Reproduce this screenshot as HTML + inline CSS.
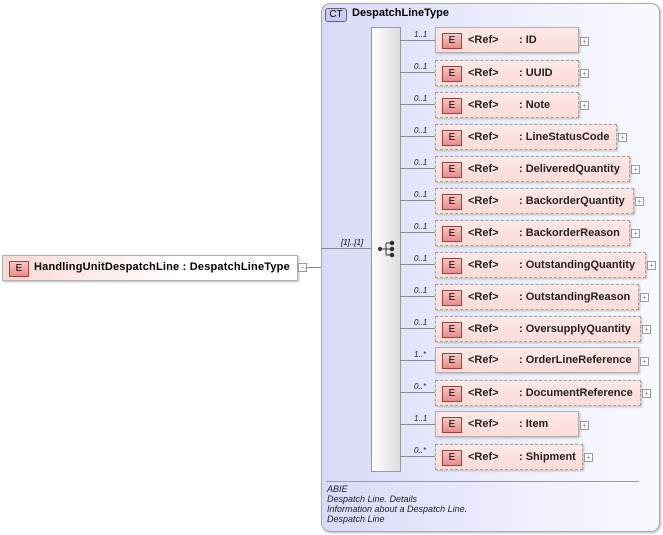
<!DOCTYPE html><html><head><style>
body{margin:0;width:663px;height:535px;background:#fff;position:relative;overflow:hidden;font-family:"Liberation Sans",Arial,sans-serif}
.a{position:absolute}
.ct{left:321px;top:3px;width:337px;height:527px;border:1px solid #a8a8b8;border-radius:9px;background:linear-gradient(90deg,#d8daf8,#eef0fd 60%,#f8f8ff);box-shadow:1px 1px 2px #bbb}
.seq{left:371px;top:27px;width:28px;height:443px;border:1px solid #999;background:linear-gradient(90deg,#fff,#ddd)}
.el{position:absolute;left:435px;height:24px;border:1px solid #b0b0b0;background:linear-gradient(180deg,#fde8e6,#fbdcd8);box-shadow:1px 1px 2px #bbb;font-size:11px;font-weight:bold;color:#222}
.el.o{border:1px dashed #a0a0a0;margin-top:1px}
.E{position:absolute;left:6px;top:5px;width:18px;height:14px;border:1px solid #a04040;background:linear-gradient(180deg,#f8c8c4,#e88c88);font-size:10px;font-weight:normal;text-align:center;line-height:14px;color:#000}
.r{position:absolute;left:32px;top:6px}
.n{position:absolute;left:83px;top:6px;white-space:nowrap}
.p{position:absolute;width:7px;height:7px;border:1px solid #999;background:#fff;font-size:8px;line-height:7px;text-align:center;color:#888}
.c{position:absolute;left:414px;font-size:8px;font-style:italic;color:#222}
.ln{position:absolute;height:1px;background:#888}
.d{position:absolute;left:327px;font-size:9px;font-style:italic;color:#222}
</style></head><body>
<div class="a ct"></div>
<div class="a" style="left:325px;top:8px;width:20px;height:12px;border:1px solid #666;border-radius:3px;background:#c8caf4;font-size:10px;text-align:center;line-height:12px">CT</div>
<div class="a" style="left:352px;top:7px;font-size:11px;font-weight:bold">DespatchLineType</div>
<div class="a seq"></div>
<svg class="a" style="left:377px;top:240px" width="20" height="18"><g fill="#333" stroke="#333"><circle cx="3" cy="9" r="1.6"/><line x1="3" y1="9" x2="9" y2="9"/><line x1="9" y1="3" x2="9" y2="15"/><line x1="9" y1="3" x2="14" y2="3"/><line x1="9" y1="9" x2="14" y2="9"/><line x1="9" y1="15" x2="14" y2="15"/><circle cx="15" cy="3" r="1.8"/><circle cx="15" cy="9" r="1.8"/><circle cx="15" cy="15" r="1.8"/></g></svg>
<div class="ln" style="left:321px;top:248px;width:50px"></div>
<div class="a" style="left:341px;top:238px;font-size:8px;font-style:italic">[1]..[1]</div>
<div class="ln" style="left:307px;top:267px;width:14px"></div>
<div class="a" style="left:2px;top:255px;width:294px;height:24px;border:1px solid #b0b0b0;background:linear-gradient(90deg,#fbd8d4,#fff 60%);box-shadow:1px 1px 2px #bbb;font-size:11px;font-weight:bold"><div class="E">E</div><div class="a" style="left:31px;top:5px;white-space:nowrap;letter-spacing:0.2px">HandlingUnitDespatchLine : DespatchLineType</div></div>
<div class="p" style="left:298px;top:263px">−</div>

<div class="ln" style="left:400px;top:40px;width:35px"></div><div class="c" style="top:30px">1..1</div><div class="el" style="top:27px;width:142px"><div class="E">E</div><div class="r">&lt;Ref&gt;</div><div class="n">: ID</div></div><div class="p" style="left:580px;top:37px">+</div>
<div class="ln" style="left:400px;top:72px;width:35px"></div><div class="c" style="top:62px">0..1</div><div class="el o" style="top:59px;width:142px"><div class="E">E</div><div class="r">&lt;Ref&gt;</div><div class="n">: UUID</div></div><div class="p" style="left:580px;top:69px">+</div>
<div class="ln" style="left:400px;top:104px;width:35px"></div><div class="c" style="top:94px">0..1</div><div class="el o" style="top:91px;width:142px"><div class="E">E</div><div class="r">&lt;Ref&gt;</div><div class="n">: Note</div></div><div class="p" style="left:580px;top:101px">+</div>
<div class="ln" style="left:400px;top:136px;width:35px"></div><div class="c" style="top:126px">0..1</div><div class="el o" style="top:123px;width:180px"><div class="E">E</div><div class="r">&lt;Ref&gt;</div><div class="n">: LineStatusCode</div></div><div class="p" style="left:618px;top:133px">+</div>
<div class="ln" style="left:400px;top:168px;width:35px"></div><div class="c" style="top:158px">0..1</div><div class="el o" style="top:155px;width:193px"><div class="E">E</div><div class="r">&lt;Ref&gt;</div><div class="n">: DeliveredQuantity</div></div><div class="p" style="left:631px;top:165px">+</div>
<div class="ln" style="left:400px;top:200px;width:35px"></div><div class="c" style="top:190px">0..1</div><div class="el o" style="top:187px;width:197px"><div class="E">E</div><div class="r">&lt;Ref&gt;</div><div class="n">: BackorderQuantity</div></div><div class="p" style="left:635px;top:197px">+</div>
<div class="ln" style="left:400px;top:232px;width:35px"></div><div class="c" style="top:222px">0..1</div><div class="el o" style="top:219px;width:193px"><div class="E">E</div><div class="r">&lt;Ref&gt;</div><div class="n">: BackorderReason</div></div><div class="p" style="left:631px;top:229px">+</div>
<div class="ln" style="left:400px;top:264px;width:35px"></div><div class="c" style="top:254px">0..1</div><div class="el o" style="top:251px;width:209px"><div class="E">E</div><div class="r">&lt;Ref&gt;</div><div class="n">: OutstandingQuantity</div></div><div class="p" style="left:647px;top:261px">+</div>
<div class="ln" style="left:400px;top:296px;width:35px"></div><div class="c" style="top:286px">0..1</div><div class="el o" style="top:283px;width:202px"><div class="E">E</div><div class="r">&lt;Ref&gt;</div><div class="n">: OutstandingReason</div></div><div class="p" style="left:640px;top:293px">+</div>
<div class="ln" style="left:400px;top:328px;width:35px"></div><div class="c" style="top:318px">0..1</div><div class="el o" style="top:315px;width:204px"><div class="E">E</div><div class="r">&lt;Ref&gt;</div><div class="n">: OversupplyQuantity</div></div><div class="p" style="left:642px;top:325px">+</div>
<div class="ln" style="left:400px;top:360px;width:35px"></div><div class="c" style="top:350px">1..*</div><div class="el" style="top:347px;width:202px"><div class="E">E</div><div class="r">&lt;Ref&gt;</div><div class="n">: OrderLineReference</div></div><div class="p" style="left:640px;top:357px">+</div>
<div class="ln" style="left:400px;top:392px;width:35px"></div><div class="c" style="top:382px">0..*</div><div class="el o" style="top:379px;width:204px"><div class="E">E</div><div class="r">&lt;Ref&gt;</div><div class="n">: DocumentReference</div></div><div class="p" style="left:642px;top:389px">+</div>
<div class="ln" style="left:400px;top:424px;width:35px"></div><div class="c" style="top:414px">1..1</div><div class="el" style="top:411px;width:142px"><div class="E">E</div><div class="r">&lt;Ref&gt;</div><div class="n">: Item</div></div><div class="p" style="left:580px;top:421px">+</div>
<div class="ln" style="left:400px;top:456px;width:35px"></div><div class="c" style="top:446px">0..*</div><div class="el o" style="top:443px;width:146px"><div class="E">E</div><div class="r">&lt;Ref&gt;</div><div class="n">: Shipment</div></div><div class="p" style="left:584px;top:453px">+</div>

<div class="ln" style="left:326px;top:481px;width:313px;background:#999"></div>
<div class="d" style="top:484px">ABIE</div>
<div class="d" style="top:494px">Despatch Line. Details</div>
<div class="d" style="top:504px">Information about a Despatch Line.</div>
<div class="d" style="top:514px">Despatch Line</div>
</body></html>
